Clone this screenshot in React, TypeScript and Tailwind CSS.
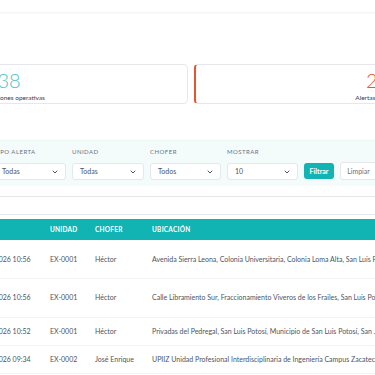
import React from "react";
import { ChevronDown } from "lucide-react";

const rows = [
  { tipo: "Exceso de velocidad", fecha: "28/01/2026 10:56", unidad: "EX-0001", chofer: "Héctor", ubicacion: "Avenida Sierra Leona, Colonia Universitaria, Colonia Loma Alta, San Luis Potosí, Municipio de San Luis Potosí", h: "h-[38px]" },
  { tipo: "Exceso de velocidad", fecha: "28/01/2026 10:56", unidad: "EX-0001", chofer: "Héctor", ubicacion: "Calle Libramiento Sur, Fraccionamiento Viveros de los Frailes, San Luis Potosí, Municipio de San Luis Potosí", h: "h-[39px]" },
  { tipo: "Frenado brusco", fecha: "28/01/2026 10:52", unidad: "EX-0001", chofer: "Héctor", ubicacion: "Privadas del Pedregal, San Luis Potosí, Municipio de San Luis Potosí, San ...", h: "h-[28px]" },
  { tipo: "Salida de zona", fecha: "28/01/2026 09:34", unidad: "EX-0002", chofer: "José Enrique", ubicacion: "UPIIZ Unidad Profesional Interdisciplinaria de Ingeniería Campus Zacatecas, Zacatecas", h: "h-[28px]" },
];

const Field = ({ label, value, w }: { label: string; value: string; w: string }) => (
  <div className={`${w} flex flex-col`}>
    <span className="text-[6px] tracking-[0.08em] text-gray-500 uppercase h-[12px] leading-[12px]">{label}</span>
    <div className="mt-[5px] h-[17px] rounded-[3px] border border-gray-200 bg-white flex items-center justify-between pl-[7px] pr-[6px]">
      <span className="text-[7px] text-gray-600">{value}</span>
      <ChevronDown size={8} strokeWidth={3} className="text-gray-600" />
    </div>
  </div>
);

export default function App() {
  return (
    <div className="w-[375px] h-[375px] overflow-hidden bg-white font-['Lato',sans-serif] text-gray-700">
      <div className="h-[13px] border-b border-gray-100 shadow-[0_1px_2px_rgba(0,0,0,0.03)]" />

      <div className="-ml-[172px] w-[760px]">
        <div className="mt-[51px] flex gap-[6px]">
          <div className="w-[360px] h-[40px] rounded-[4px] border border-gray-200 flex flex-col items-center pt-[4px]">
            <span className="text-[20px] leading-[22px] font-light text-[#4cc3c3] pl-[2px]">38</span>
            <span className="mt-[2px] text-[6.5px] text-gray-700 pl-[8px]">Ubicaciones operativas</span>
          </div>
          <div className="w-[360px] h-[40px] rounded-[4px] border border-gray-200 border-l-[2px] border-l-[#e4572e] flex flex-col items-center pt-[4px]">
            <span className="text-[20px] leading-[22px] font-light text-[#e4572e] pl-[6px]">20</span>
            <span className="mt-[2px] text-[6.5px] text-gray-700 pl-[2px]">Alertas del día</span>
          </div>
        </div>

        <div className="mt-[36px] h-[46px] bg-[#f4fbfb] border-t border-[#eef6f6] flex items-start gap-[6px] pl-[6px] pt-[5px]">
          <Field label="Desde" value="dd/mm/aaaa" w="w-[74px]" />
          <Field label="Hasta" value="dd/mm/aaaa" w="w-[74px]" />
          <Field label="Tipo alerta" value="Todas" w="w-[72px]" />
          <Field label="Unidad" value="Todas" w="w-[72px]" />
          <Field label="Chofer" value="Todos" w="w-[71px]" />
          <Field label="Mostrar" value="10" w="w-[71px]" />
          <button className="mt-[17px] h-[16px] w-[30px] rounded-[3px] bg-[#12b3b3] text-white text-[7px] font-bold">Filtrar</button>
          <button className="mt-[16px] h-[18px] w-[37px] rounded-[3px] border border-gray-200 bg-white text-gray-500 text-[7px]">Limpiar</button>
        </div>

        <div className="mt-[10px] h-[19px] border-y border-gray-200 bg-white" />

        <table className="mt-[4px] table-fixed w-[760px] border-collapse text-left">
          <colgroup>
            <col className="w-[136px]" />
            <col className="w-[78px]" />
            <col className="w-[45px]" />
            <col className="w-[57px]" />
            <col className="w-[444px]" />
          </colgroup>
          <thead>
            <tr className="h-[21px] bg-[#12b3b3] text-white text-[6.5px] font-bold tracking-[0.04em]">
              <th className="pl-[8px] font-bold">TIPO</th>
              <th className="pl-[8px] font-bold">FECHA</th>
              <th className="pl-[8px] font-bold">UNIDAD</th>
              <th className="pl-[8px] font-bold">CHOFER</th>
              <th className="pl-[8px] font-bold">UBICACIÓN</th>
            </tr>
          </thead>
          <tbody className="text-[7px] text-gray-600">
            {rows.map((r, i) => (
              <tr key={i} className={`${r.h} border-b border-gray-100`}>
                <td className="pl-[8px]">{r.tipo}</td>
                <td className="pl-[8px] whitespace-nowrap">{r.fecha}</td>
                <td className="pl-[8px]">{r.unidad}</td>
                <td className="pl-[8px] whitespace-nowrap">{r.chofer}</td>
                <td className="pl-[8px] whitespace-nowrap overflow-hidden">{r.ubicacion}</td>
              </tr>
            ))}
          </tbody>
        </table>
      </div>
    </div>
  );
}
